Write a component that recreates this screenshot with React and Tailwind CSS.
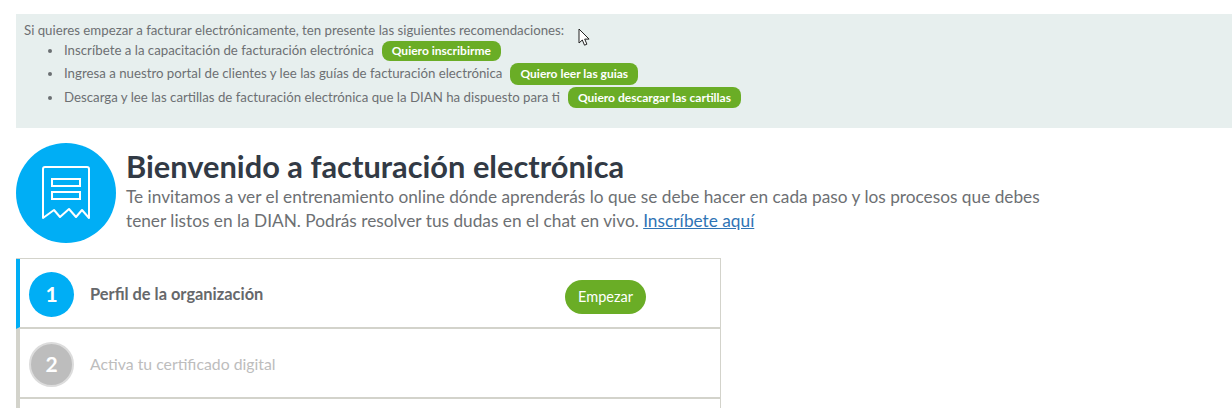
import React from 'react'

const font = { fontFamily: 'Lato, "Noto Sans", sans-serif' }

function GreenLink({ children }) {
  return (
    <span className="ml-2 inline-flex h-full items-center rounded-lg bg-[#6aad26] px-2.5 text-[12px] font-bold whitespace-nowrap text-white">
      {children}
    </span>
  )
}

function Recommendation({ text, cta, className }) {
  return (
    <li className={`flex items-center ${className}`}>
      <span className="mr-[12px] h-[4px] w-[4px] rounded-full bg-[#6b6f72]" />
      <span>{text}</span>
      <GreenLink>{cta}</GreenLink>
    </li>
  )
}

function ReceiptIcon() {
  return (
    <svg width="48" height="54" viewBox="0 0 48 54" fill="none" stroke="white" strokeWidth="2">
      <path d="M1 52V3a2 2 0 0 1 2-2h42a2 2 0 0 1 2 2v49L40 44l-6 7-7-8-9 8-6-7z" strokeLinejoin="round" />
      <rect x="10" y="13" width="28" height="7" />
      <rect x="10" y="26" width="28" height="7" />
    </svg>
  )
}

function Step({ n, label, active, children }) {
  return (
    <div
      className={`flex h-[70px] items-center border-b-2 border-l-4 border-b-[#d3d3cb] pl-[9px] ${active ? 'border-l-[#00aef5]' : 'border-l-[#d3d3cb]'}`}
    >
      <div
        className={`mt-0.5 flex h-[45px] w-[45px] shrink-0 items-center justify-center rounded-full text-[21px] font-bold text-white ${active ? 'bg-[#00aef5]' : 'border-2 border-[#dcdcdc] bg-[#bdbdbd]'}`}
      >
        {n}
      </div>
      <div className={`mt-0.5 ml-4 w-[475px] ${active ? 'text-[16.4px] font-bold text-[#66686b]' : 'text-[15.8px] text-[#bdbdbd]'}`}>{label}</div>
      {children}
    </div>
  )
}

export default function App() {
  return (
    <div className="relative h-[408px] overflow-hidden bg-white pt-3.5 pl-4 text-[#6d7073]" style={font}>
      <section className="h-[114px] bg-[#e7efee] pt-2 pl-2 text-[13.25px]">
        <p className="leading-[17px]">Si quieres empezar a facturar electrónicamente, ten presente las siguientes recomendaciones:</p>
        <ul className="mt-[2px] pl-[24px]">
          <Recommendation text="Inscríbete a la capacitación de facturación electrónica" cta="Quiero inscribirme" className="h-[20px]" />
          <Recommendation text="Ingresa a nuestro portal de clientes y lee las guías de facturación electrónica" cta="Quiero leer las guias" className="mt-[2px] h-[22px]" />
          <Recommendation text="Descarga y lee las cartillas de facturación electrónica que la DIAN ha dispuesto para ti" cta="Quiero descargar las cartillas" className="mt-[2px] h-[21px]" />
        </ul>
      </section>

      <header className="mt-[15px] flex">
        <div className="flex h-[100px] w-[100px] shrink-0 items-center justify-center rounded-full bg-[#00aef5]">
          <ReceiptIcon />
        </div>
        <div className="ml-[10px] w-[925px]">
          <h1 className="mt-[6px] text-[30.8px] leading-[36px] font-bold text-[#323a45]">Bienvenido a facturación electrónica</h1>
          <p className="text-[17.25px] leading-[24px]">
            Te invitamos a ver el entrenamiento online dónde aprenderás lo que se debe hacer en cada paso y los procesos que debes tener listos en la DIAN. Podrás resolver tus dudas en el chat en vivo.{' '}
            <a className="text-[#2f74b5] underline">Inscríbete aquí</a>
          </p>
        </div>
      </header>

      <div className="mt-[15px] w-[705px] border-t border-r border-[#d3d3cb]">
        <Step n="1" label="Perfil de la organización" active>
          <button className="mt-2 h-[34px] w-[81px] rounded-full bg-[#6aad26] text-[14.5px] text-white">Empezar</button>
        </Step>
        <Step n="2" label="Activa tu certificado digital" />
        <div className="h-[12px] border-l-4 border-l-[#d3d3cb]" />
      </div>

      {/* captured mouse pointer */}
      <svg className="absolute top-[28px] left-[578px]" width="13" height="19" viewBox="0 0 13 19">
        <path d="M1 1v14l3.3-3 2.2 5.2 2.4-1-2.2-5.1h4.4z" fill="white" stroke="#222" strokeWidth="1" strokeLinejoin="round" />
      </svg>
    </div>
  )
}
